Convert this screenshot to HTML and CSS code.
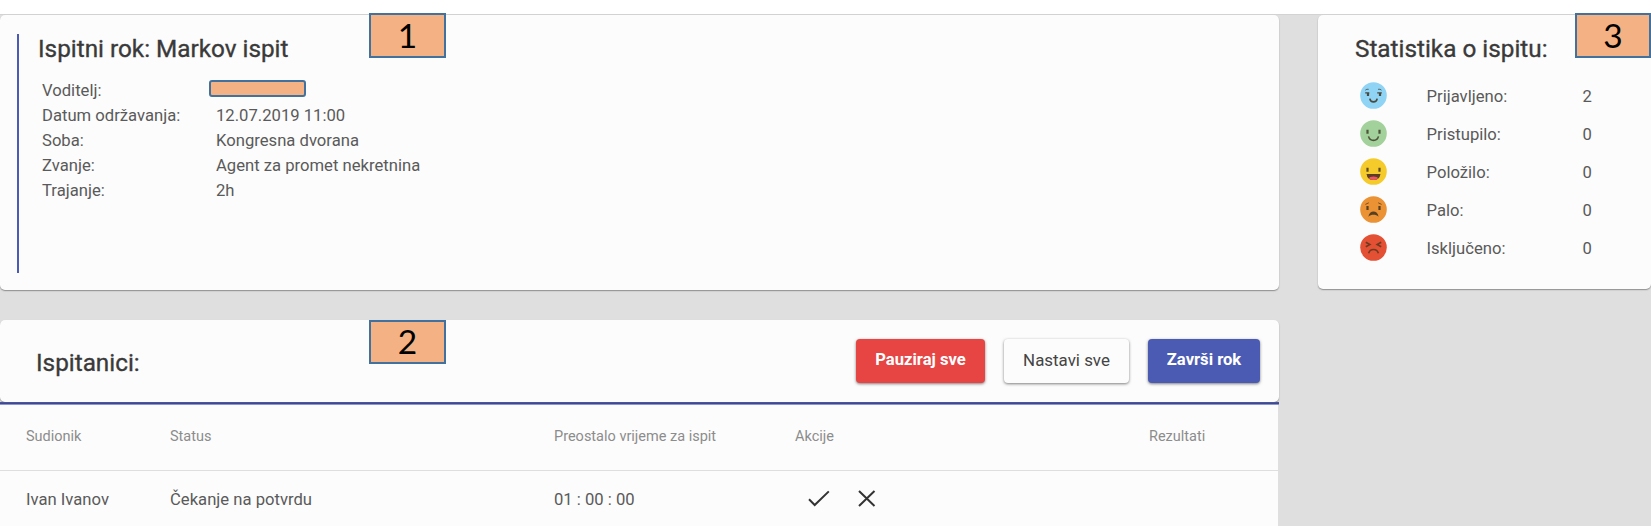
FILE: index.html
```html
<!DOCTYPE html>
<html lang="hr">
<head>
<meta charset="utf-8">
<title>Ispitni rok</title>
<link rel="stylesheet" href="styles.css">
</head>
<body>
<div class="page">
  <main class="main">
    <section class="card exam">
      <div class="exam-body">
        <h2 class="title">Ispitni rok: Markov ispit</h2>
        <dl class="details">
          <dt>Voditelj:</dt><dd><span class="redacted"></span></dd>
          <dt>Datum održavanja:</dt><dd>12.07.2019 11:00</dd>
          <dt>Soba:</dt><dd>Kongresna dvorana</dd>
          <dt>Zvanje:</dt><dd>Agent za promet nekretnina</dd>
          <dt>Trajanje:</dt><dd>2h</dd>
        </dl>
      </div>
      <span class="marker marker-1">1</span>
    </section>
    <section class="people">
      <header class="card toolbar">
        <h2 class="title">Ispitanici:</h2>
        <div class="buttons">
          <button class="btn btn-red">Pauziraj sve</button>
          <button class="btn btn-plain">Nastavi sve</button>
          <button class="btn btn-blue">Završi rok</button>
        </div>
        <span class="marker marker-2">2</span>
      </header>
      <div class="table">
        <div class="row head"><span>Sudionik</span><span>Status</span><span>Preostalo vrijeme za ispit</span><span>Akcije</span><span>Rezultati</span></div>
        <div class="row"><span>Ivan Ivanov</span><span>Čekanje na potvrdu</span><span>01 : 00 : 00</span>
          <span class="actions">
            <svg class="icon" viewBox="0 0 24 24"><path d="M2 12.3L7.7 18L21.8 4.4"/></svg>
            <svg class="icon" viewBox="0 0 24 24"><path d="M4 4L19.5 19M19.5 4L4 19"/></svg>
          </span><span></span></div>
      </div>
    </section>
  </main>
  <aside class="card stats">
    <h2 class="title">Statistika o ispitu:</h2>
    <div class="stat">
      <svg class="face" viewBox="0 0 27 27"><circle cx="13.5" cy="13.5" r="13.3" fill="#8fd3f5"/><g fill="none" stroke="#4a4a3c" stroke-width="1.3"><path d="M5.3 8.2Q6.8 6.8 8.7 7.3M18 7.3Q20.3 6.8 21.5 8.2" stroke-width=".8"/><path d="M5.2 10.8H9.3M17.2 10.8H21.8"/><path d="M8 11V14M20 11V14" stroke-width="2.2"/><path d="M9.8 16.6Q10.4 19.9 13.5 19.9T17.2 16.6" stroke-width="1.6"/></g></svg>
      <span>Prijavljeno:</span><span>2</span></div>
    <div class="stat">
      <svg class="face" viewBox="0 0 27 27"><circle cx="13.5" cy="13.5" r="13.3" fill="#a3d19b"/><g fill="none" stroke="#4f5438"><path d="M7.5 9.8V13.8M19.5 9.8V13.8" stroke-width="2.2"/><path d="M8.5 16.4Q9.6 20.4 13.5 20.4T18.5 16.4" stroke-width="1.6"/></g></svg>
      <span>Pristupilo:</span><span>0</span></div>
    <div class="stat">
      <svg class="face" viewBox="0 0 27 27"><circle cx="13.5" cy="13.5" r="13.3" fill="#f5cb2b"/><path d="M7.5 9.8V13.8M19.5 9.8V13.8" stroke="#5c4a25" stroke-width="2.2"/><path d="M6.5 16H20.5Q19.6 22 13.5 22T6.5 16Z" fill="#5a3d24"/><ellipse cx="13.5" cy="20.3" rx="4.3" ry="1.7" fill="#ed5564"/></svg>
      <span>Položilo:</span><span>0</span></div>
    <div class="stat">
      <svg class="face" viewBox="0 0 27 27"><circle cx="13.5" cy="13.5" r="13.3" fill="#eb9235"/><path d="M5.4 8.4L8.8 6.8M18.2 6.8L21.6 8.4" stroke="#6b4a25" stroke-width=".9"/><path d="M7.5 10V14M19.5 10V14" stroke="#554024" stroke-width="2.2"/><path d="M8.4 20.8C9.2 13.8 17.8 13.8 18.6 20.8C16 18.2 11 18.2 8.4 20.8Z" fill="#554024"/></svg>
      <span>Palo:</span><span>0</span></div>
    <div class="stat">
      <svg class="face" viewBox="0 0 27 27"><circle cx="13.5" cy="13.5" r="13.3" fill="#e35034"/><g fill="none" stroke="#6d3b22" stroke-width="1.6"><path d="M5.8 8.2L9.9 10.5L5.8 12.8M21.2 8.2L17.1 10.5L21.2 12.8"/><path d="M8.6 19.2Q9.8 15.5 13.5 15.5T18.4 19.2"/></g></svg>
      <span>Isključeno:</span><span>0</span></div>
    <span class="marker marker-3">3</span>
  </aside>
</div>
</body>
</html>
```
FILE: styles.css
```css
* { box-sizing: border-box; }
html { background: #fff; }
body { margin: 0; height: 526px; padding-top: 14px; overflow: hidden; font: 16.65px/25px Roboto, sans-serif; color: #5a5a5a; }
.page { height: 512px; background: #dfdfdf; border-top: 1px solid #d3d3d3; display: grid; grid-template-columns: 1279px 333.5px; column-gap: 38.5px; align-items: start; }
.card { position: relative; background: #fcfcfc; border-radius: 5px; box-shadow: 0 1px 1px rgba(0,0,0,.26), 0 1px 2px rgba(0,0,0,.14); }
.title { margin: 0; font-size: 24.3px; line-height: 30px; font-weight: 400; -webkit-text-stroke: .35px #3a3a3a; color: #3a3a3a; white-space: nowrap; }
.exam { height: 275px; padding: 19px 16px 17px 17px; }
.exam-body { height: 239px; border-left: 2px solid #4b5bb3; padding-left: 19px; }
.details { display: grid; grid-template-columns: 174px auto; grid-auto-rows: 25px; margin: 14px 0 0 4px; }
.details dd { margin: 0; }
.redacted { display: block; width: 97px; height: 17px; margin: 2px 0 0 -7px; border: 2px solid #41719c; border-radius: 3px; background: #f4b183; }
.marker { position: absolute; width: 77px; height: 45px; border: 2px solid #41719c; background: #f4b183; color: #000; font: 33.5px/40px Lato, sans-serif; text-align: center; }
.marker-1 { left: 369px; top: -2px; }
.marker-2 { left: 369px; top: 0; height: 44px; line-height: 38px; }
.marker-3 { right: 0; top: -2px; width: 76px; }
.people { margin-top: 30px; }
.toolbar { height: 82px; padding: 19px 19px 0 36px; display: flex; justify-content: space-between; }
.toolbar .title { margin-top: 9px; }
.buttons { display: flex; gap: 19px; }
.btn { height: 44px; border: 0; border-radius: 4px; padding: 0 0 3px; font: 500 16.6px/20px Roboto, sans-serif; color: #fff; box-shadow: 0 1px 3px rgba(0,0,0,.5); white-space: nowrap; }
.btn-red { width: 129px; background: #e64543; font-weight: 700; }
.btn-plain { width: 125px; background: #fcfcfc; color: #444; font-weight: 400; font-size: 16.9px; }
.btn-blue { width: 112px; background: #4b5bb3; font-weight: 700; }
.table { position: relative; background: #fcfcfc; width: 1278px; }
.table::before { content: ""; display: block; width: 1279px; height: 3px; background: linear-gradient(#4b5592 0 1px, #3c489a 1px 2px, #8b96cf 2px); }
.row { display: grid; grid-template-columns: 144px 384px 241px 354px auto; padding-left: 26px; height: 56px; align-items: center; }
.head { height: 66px; padding-bottom: 2px; border-bottom: 1px solid #dedede; font-size: 14.5px; color: #8c8c8c; }
.actions { display: flex; gap: 24px; padding-left: 12px; }
.icon { width: 24px; height: 24px; fill: none; stroke: #333; stroke-width: 2; }
.stats { height: 274px; padding: 19px 0 0 37.5px; }
.stat { display: grid; grid-template-columns: 67px 156px auto; height: 38px; align-items: center; padding-left: 4.5px; }
.stats .title { margin-bottom: 13px; }
.face { width: 27px; height: 27px; margin-bottom: 2px; }
```
